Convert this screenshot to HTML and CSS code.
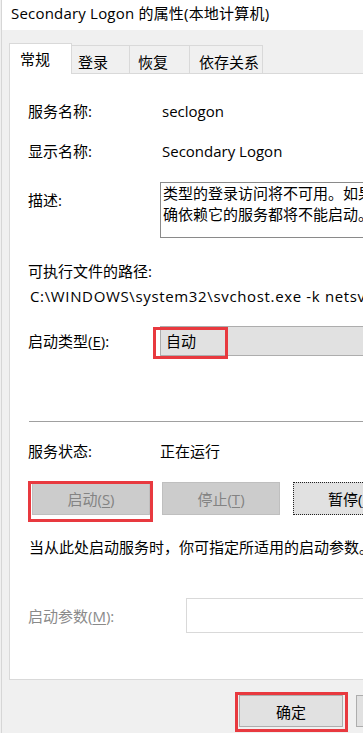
FILE: index.html
```html
<!DOCTYPE html>
<html lang="zh-CN">
<head>
<meta charset="utf-8">
<title>Secondary Logon 的属性</title>
<link rel="stylesheet" href="styles.css">
</head>
<body>
<div class="window">
  <div class="titlebar">Secondary Logon 的属性(本地计算机)</div>
  <div class="dialog">
    <div class="tabs">
      <div class="tab active t1">常规</div>
      <div class="tab t2">登录</div>
      <div class="tab t3">恢复</div>
      <div class="tab t4">依存关系</div>
    </div>
    <div class="panel">
      <div class="row r-name"><span class="label">服务名称:</span><span class="value">seclogon</span></div>
      <div class="row r-display"><span class="label">显示名称:</span><span class="value">Secondary Logon</span></div>
      <div class="row r-desc">
        <span class="label desc-label">描述:</span>
        <div class="descbox">
          <div class="line">类型的登录访问将不可用。如果此服务被禁用，则明</div>
          <div class="line">确依赖它的服务都将不能启动。</div>
        </div>
      </div>
      <div class="pathlabel">可执行文件的路径:</div>
      <div class="path">C:\WINDOWS\system32\svchost.exe -k netsvcs -p</div>
      <div class="row r-type">
        <span class="label">启动类型(<u>E</u>):</span>
        <div class="combo">自动<span class="mark mark-combo"></span></div>
      </div>
      <div class="sep"></div>
      <div class="row r-status"><span class="label">服务状态:</span><span class="value status">正在运行</span></div>
      <div class="buttons">
        <button class="btn disabled start">启动(<u>S</u>)<span class="mark mark-start"></span></button>
        <button class="btn disabled">停止(<u>T</u>)</button>
        <button class="btn focus">暂停(<u>P</u>)</button>
      </div>
      <div class="hint">当从此处启动服务时，你可指定所适用的启动参数。</div>
      <div class="row r-param">
        <span class="label param-label">启动参数(<u>M</u>):</span>
        <div class="param-input"></div>
      </div>
    </div>
    <div class="footer">
      <button class="fbtn ok">确定<span class="mark mark-ok"></span></button>
      <button class="fbtn">取消</button>
    </div>
  </div>
</div>
</body>
</html>
```
FILE: styles.css
```css
html, body {
  margin: 0;
  padding: 0;
}
body {
  background: #f0f0f0;
  width: 363px;
  height: 733px;
  overflow: hidden;
  font-family: "Open Sans", "Noto Sans CJK SC", sans-serif;
  font-size: 15px;
  color: #000;
}
u {
  text-decoration: underline;
  text-underline-offset: 2px;
}
.window {
  width: 468px;
  margin-left: 1px;
  border-left: 1px solid #d6d6d6;
  min-height: 733px;
}
.titlebar {
  height: 30px;
  background: #fff;
  padding-left: 9px;
  line-height: 26px;
  white-space: nowrap;
  letter-spacing: 0.2px;
}
.dialog {
  padding: 13px 0 0 7px;
}
.tabs {
  display: flex;
  align-items: flex-end;
  height: 30px;
}
.tab {
  box-sizing: border-box;
  height: 28px;
  padding-top: 4px;
  display: flex;
  align-items: center;
  background: #f0f0f0;
  border: 1px solid #d9d9d9;
  border-bottom: none;
  border-left: none;
  white-space: nowrap;
}
.tab.active {
  height: 31px;
  padding-top: 0;
  padding-bottom: 2px;
  background: #fff;
  border-left: 1px solid #d9d9d9;
  margin-bottom: -1px;
  position: relative;
  z-index: 1;
}
.t1 { width: 63px; padding-left: 10px; }
.t2 { width: 58px; padding-left: 6px; }
.t3 { width: 60px; padding-left: 8px; }
.t4 { width: 73px; padding-left: 9px; }

.panel {
  box-sizing: border-box;
  height: 607px;
  background: #fff;
  border: 1px solid #d9d9d9;
  padding-left: 18px;
  display: flex;
  flex-direction: column;
}
.row {
  display: flex;
  align-items: center;
  height: 24px;
  white-space: nowrap;
}
.label {
  width: 132px;
  flex: none;
  line-height: 24px;
}
.value {
  padding-left: 2px;
  line-height: 24px;
}
.status {
  padding-left: 0;
}
.r-name { margin-top: 25px; }
.r-display { margin-top: 16px; }
.r-desc {
  margin-top: 19px;
  height: 56px;
  align-items: flex-start;
}
.desc-label {
  padding-top: 6px;
}
.descbox {
  box-sizing: border-box;
  flex: 1;
  height: 56px;
  border: 1px solid #8a8a8a;
  background: #fff;
  padding-left: 2px;
  overflow: hidden;
}
.descbox .line {
  line-height: 21px;
  white-space: nowrap;
}
.pathlabel {
  margin-top: 21px;
  line-height: 24px;
}
.path {
  margin-top: 1px;
  padding-left: 2px;
  line-height: 24px;
  white-space: nowrap;
  letter-spacing: 0.65px;
}
.r-type {
  margin-top: 18px;
  height: 30px;
}
.combo {
  position: relative;
  box-sizing: border-box;
  flex: 1;
  height: 30px;
  background: #e1e1e1;
  border: 1px solid #adadad;
  padding-left: 5px;
  line-height: 28px;
}
.sep {
  margin-top: 65px;
  margin-left: 1px;
  height: 1px;
  background: #a0a0a0;
}
.r-status { margin-top: 17px; }
.buttons {
  margin-top: 19px;
  margin-left: 4px;
  display: flex;
  gap: 12px;
  height: 33px;
}
.btn {
  position: relative;
  box-sizing: border-box;
  width: 118px;
  height: 33px;
  flex: none;
  font: inherit;
  margin: 0;
  padding: 0;
  white-space: nowrap;
}
.btn.disabled {
  background: #cccccc;
  border: 1px solid #bfbfbf;
  color: #838383;
}
.btn.focus {
  margin-left: 1px;
  background: #e1e1e1;
  border: 1px dotted #222;
  color: #000;
}
.hint {
  margin-top: 20px;
  margin-left: 1px;
  line-height: 24px;
  white-space: nowrap;
}
.r-param {
  margin-top: 39px;
  height: 35px;
}
.param-label {
  width: 158px;
  color: #8a8a8a;
}
.param-input {
  box-sizing: border-box;
  flex: 1;
  height: 35px;
  background: #fff;
  border: 1px solid #d9d9d9;
}
.footer {
  margin-top: 15px;
  display: flex;
  justify-content: flex-end;
  gap: 13px;
  padding-right: 10px;
}
.fbtn {
  position: relative;
  box-sizing: border-box;
  width: 104px;
  height: 32px;
  font: inherit;
  margin: 0;
  padding: 0;
  background: #e1e1e1;
  border: 1px solid #adadad;
  color: #000;
}
.mark {
  position: absolute;
  box-sizing: border-box;
  border: 3px solid #e8393f;
  pointer-events: none;
}
.mark-combo {
  left: -8px;
  top: 0;
  width: 75px;
  height: 32px;
}
.mark-start {
  left: -5px;
  top: -2px;
  width: 125px;
  height: 41px;
}
.mark-ok {
  left: -5px;
  top: -4px;
  width: 113px;
  height: 40px;
}
```
